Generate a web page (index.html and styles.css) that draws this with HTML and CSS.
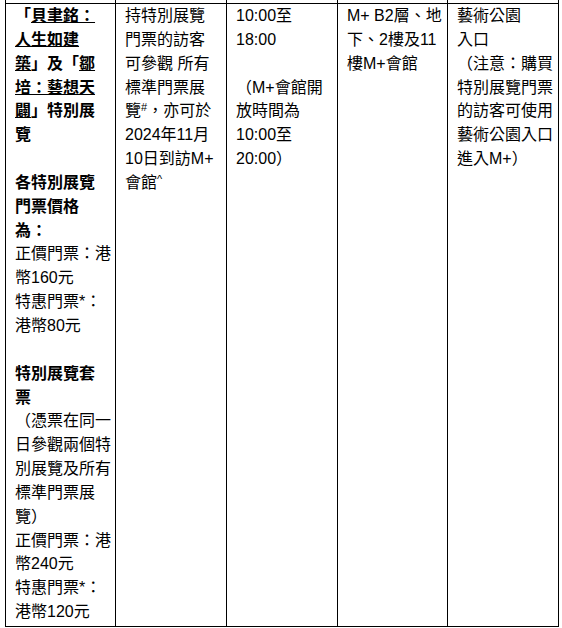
FILE: index.html
```html
<!DOCTYPE html>
<html lang="zh-Hant">
<head>
<meta charset="utf-8">
<title>M+ 特別展覽</title>
<link rel="stylesheet" href="styles.css">
</head>
<body>
<table class="info">
  <colgroup>
    <col class="c1"><col class="c2"><col class="c3"><col class="c4"><col class="c5">
  </colgroup>
  <tr class="stub"><td></td><td></td><td></td><td></td><td></td></tr>
  <tr>
    <td>
      <strong>「<a href="#">貝聿銘：<br>人生如建<br>築</a>」及「<a href="#">鄒<br>培：藝想天<br>闢</a>」特別展<br>覽</strong><br>
      <br>
      <strong>各特別展覽<br>門票價格<br>為：</strong><br>
      正價門票：港<br>幣160元<br>特惠門票*：<br>港幣80元<br>
      <br>
      <strong>特別展覽套<br>票</strong><br>
      （憑票在同一<br>日參觀兩個特<br>別展覽及所有<br>標準門票展<br>覽）<br>
      正價門票：港<br>幣240元<br>特惠門票*：<br>港幣120元
    </td>
    <td>持特別展覽<br>門票的訪客<br>可參觀 所有<br>標準門票展<br>覽<sup>#</sup>，亦可於<br>2024年11月<br>10日到訪M+<br>會館<sup>^</sup></td>
    <td>10:00至<br>18:00<br><br>（M+會館開<br>放時間為<br>10:00至<br>20:00）</td>
    <td>M+ B2層、地<br>下、2樓及11<br>樓M+會館</td>
    <td>藝術公園<br>入口<br>（注意：購買<br>特別展覽門票<br>的訪客可使用<br>藝術公園入口<br>進入M+）</td>
  </tr>
</table>
</body>
</html>
```

FILE: styles.css
```css
html, body {
  margin: 0;
  padding: 0;
  background: #fff;
}
body {
  font-family: "Liberation Sans", "Noto Sans CJK TC", sans-serif;
  font-size: 16px;
  line-height: 23.85px;
  color: #000;
}
.info {
  margin-left: 5px;
  border-collapse: collapse;
  table-layout: fixed;
  width: 553px;
}
.c1 { width: 110px; }
.c2 { width: 111px; }
.c3 { width: 111px; }
.c4 { width: 110px; }
.c5 { width: 111px; }
.info td {
  border: 1px solid #000;
  vertical-align: top;
  padding: 0 1px 2px 9px;
  white-space: nowrap;
}
.info .stub td {
  border-top: none;
  height: 3px;
  padding: 0;
}
.info a {
  color: #000;
  text-decoration: underline;
}
.info strong {
  font-weight: bold;
}
.info sup {
  font-size: 11px;
  line-height: 0;
  vertical-align: 5px;
}
```
